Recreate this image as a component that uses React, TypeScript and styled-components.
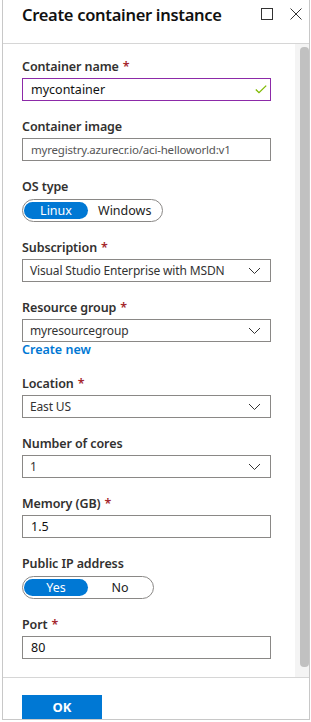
import styled, { createGlobalStyle } from 'styled-components'

const blue = '#0078d4'
const line = '#c8c8c8'
const text = '#323130'

const GlobalStyle = createGlobalStyle`
  html, body {
    margin: 0;
    padding: 0;
    background: #fff;
  }
  body {
    font-family: "Noto Sans", "Open Sans", sans-serif;
    color: ${text};
  }
  * { box-sizing: border-box; }
`

type FieldProps = { label: string; required?: boolean; children: React.ReactNode }

function Field({ label, required, children }: FieldProps) {
  return (
    <FieldBox>
      <Label>
        {label}
        {required && <Star>*</Star>}
      </Label>
      {children}
    </FieldBox>
  )
}

function Chevron() {
  return (
    <svg width="13" height="8" viewBox="0 0 13 8">
      <path d="M1 1 L6.5 6.5 L12 1" fill="none" stroke="#333" strokeWidth="1" />
    </svg>
  )
}

function Dropdown({ value }: { value: string }) {
  return (
    <Select>
      <SelectText>{value}</SelectText>
      <Chevron />
    </Select>
  )
}

function Toggle({ options, active }: { options: string[]; active: number }) {
  return (
    <ToggleBox>
      {options.map((o, i) => (
        <Segment key={o} $on={i === active}>{o}</Segment>
      ))}
    </ToggleBox>
  )
}

function App() {
  return (
    <>
      <GlobalStyle />
      <Page>
        <Blade>
          <Header>
            <Title>Create container instance</Title>
            <HeaderIcons>
              <svg width="12" height="12" viewBox="0 0 12 12">
                <rect x="0.5" y="0.5" width="11" height="11" fill="none" stroke="#333" strokeWidth="1" />
              </svg>
              <svg width="12" height="12" viewBox="0 0 12 12">
                <path d="M0.5 0.5 L11.5 11.5 M11.5 0.5 L0.5 11.5" fill="none" stroke="#333" strokeWidth="1" />
              </svg>
            </HeaderIcons>
          </Header>

          <Body>
            <Form>
              <Field label="Container name" required>
                <InputWrap>
                  <TextInput $focus defaultValue="mycontainer" readOnly />
                  <Check width="12" height="9" viewBox="0 0 12 9">
                    <path d="M0.8 4.5 L4 7.7 L11.2 0.6" fill="none" stroke="#7fba00" strokeWidth="1.3" />
                  </Check>
                </InputWrap>
              </Field>
              <Field label="Container image">
                <TextInput $muted defaultValue="myregistry.azurecr.io/aci-helloworld:v1" readOnly />
              </Field>
              <Field label="OS type">
                <Toggle options={['Linux', 'Windows']} active={0} />
              </Field>
              <Field label="Subscription" required>
                <Dropdown value="Visual Studio Enterprise with MSDN" />
              </Field>
              <Field label="Resource group" required>
                <Dropdown value="myresourcegroup" />
                <Link>Create new</Link>
              </Field>
              <Field label="Location" required>
                <Dropdown value="East US" />
              </Field>
              <Field label="Number of cores">
                <Dropdown value="1" />
              </Field>
              <Field label="Memory (GB)" required>
                <TextInput defaultValue="1.5" readOnly />
              </Field>
              <Field label="Public IP address">
                <Toggle options={['Yes', 'No']} active={0} />
              </Field>
              <Field label="Port" required>
                <TextInput defaultValue="80" readOnly />
              </Field>
            </Form>
            <Track>
              <Thumb />
            </Track>
          </Body>

          <Footer>
            <OkButton>OK</OkButton>
          </Footer>
        </Blade>
      </Page>
    </>
  )
}

const Page = styled.div`
  width: 311px;
  height: 722px;
  padding-left: 2px;
  overflow: hidden;
`
const Blade = styled.div`
  width: 308px;
  height: 720px;
  display: flex;
  flex-direction: column;
  border: 1px solid ${line};
  border-top: none;
  overflow: hidden;
`
const Header = styled.div`
  height: 44px;
  flex-shrink: 0;
  display: flex;
  align-items: flex-start;
  justify-content: space-between;
  padding: 3px 7px 0 19px;
  border-bottom: 1px solid #d6d6d6;
`
const Title = styled.h1`
  margin: 0;
  font-size: 16.5px;
  line-height: 24px;
  font-weight: 600;
  color: #111;
  letter-spacing: -0.3px;
`
const HeaderIcons = styled.div`
  display: flex;
  gap: 17px;
  padding-top: 5px;
`
const Body = styled.div`
  flex: 1;
  display: flex;
  min-height: 0;
`
const Form = styled.div`
  flex: 1;
  padding: 14px 24px 0 19px;
`
const Track = styled.div`
  width: 14px;
  background: #f4f4f4;
  padding: 3px 0 10px 5px;
  display: flex;
`
const Thumb = styled.div`
  flex: 1;
  background: #c1c1c1;
  border-radius: 4px;
`
const FieldBox = styled.div`
  margin-bottom: 17px;
`
const Label = styled.div`
  font-size: 12.5px;
  line-height: 18px;
  font-weight: 600;
  color: ${text};
  margin-bottom: 2px;
  letter-spacing: -0.1px;
`
const Star = styled.span`
  color: #a4262c;
  margin-left: 4px;
`
const InputWrap = styled.div`
  position: relative;
`
const TextInput = styled.input<{ $focus?: boolean; $muted?: boolean }>`
  display: block;
  width: 249px;
  height: 23px;
  margin: 0;
  padding: 0 8px;
  border: 1px solid ${p => (p.$focus ? '#8c2aa8' : '#8a8886')};
  border-radius: 0;
  outline: none;
  background: #fff;
  font-family: "Noto Sans", "Open Sans", sans-serif;
  font-size: ${p => (p.$muted ? '11.5px' : '12.5px')};
  letter-spacing: ${p => (p.$muted ? '-0.2px' : '0')};
  color: ${p => (p.$muted ? '#555' : '#111')};
`
const Check = styled.svg`
  position: absolute;
  right: 4px;
  top: 7px;
`
const Select = styled.div`
  width: 249px;
  height: 23px;
  display: flex;
  align-items: center;
  justify-content: space-between;
  padding: 0 9px 0 7px;
  border: 1px solid #8a8886;
  background: #fff;
`
const SelectText = styled.span`
  font-size: 12px;
  letter-spacing: -0.15px;
  color: #333;
  white-space: nowrap;
`
const Link = styled.div`
  font-size: 12.5px;
  line-height: 16px;
  font-weight: 600;
  color: ${blue};
`
const ToggleBox = styled.div`
  display: inline-flex;
  align-items: center;
  height: 23px;
  padding: 0 1px;
  border: 1px solid #8a8886;
  border-radius: 12px;
`
const Segment = styled.div<{ $on: boolean }>`
  min-width: 64px;
  height: 17px;
  padding: 0 10px;
  display: flex;
  align-items: center;
  justify-content: center;
  border-radius: 9px;
  font-size: 12.5px;
  background: ${p => (p.$on ? blue : 'transparent')};
  color: ${p => (p.$on ? '#fff' : '#222')};
`
const Footer = styled.div`
  height: 42px;
  flex-shrink: 0;
  border-top: 1px solid #d6d6d6;
  padding: 17px 0 0 19px;
`
const OkButton = styled.div`
  width: 80px;
  height: 24px;
  background: ${blue};
  color: #fff;
  font-size: 13px;
  font-weight: 700;
  display: flex;
  align-items: center;
  justify-content: center;
`

export default App
